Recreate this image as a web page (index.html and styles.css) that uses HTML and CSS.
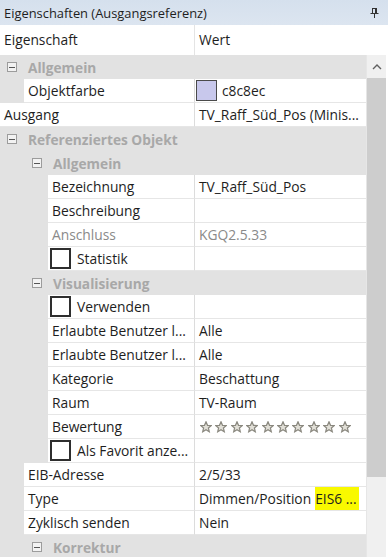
FILE: index.html
```html
<!DOCTYPE html>
<html lang="de">
<head>
    <meta charset="UTF-8">
    <title>Eigenschaften</title>
    <link rel="stylesheet" href="styles.css">
</head>
<body>
    <div class="panel">
        <div class="titlebar">
            <span>Eigenschaften (Ausgangsreferenz)</span>
            <svg class="pin" width="9" height="10" viewBox="0 0 9 10">
                <path d="M2 0.5h5M2.5 0.5v5M5.5 0.5v5M6.5 0.5v5M0.5 5.5h8M4.5 5.5v4.5" stroke="#333" stroke-width="1" fill="none"/>
            </svg>
        </div>
        <div class="header">
            <div class="hname">Eigenschaft</div>
            <div class="hvalue">Wert</div>
        </div>
        <div class="body">
            <div class="grid">
                <div class="row group g0"><span class="toggle"></span><span class="gname">Allgemein</span></div>
                <div class="row prop l1"><div class="name">Objektfarbe</div><div class="value"><span class="swatch"></span>c8c8ec</div></div>
                <div class="row prop l0"><div class="name">Ausgang</div><div class="value">TV_Raff_Süd_Pos (Minis...</div></div>
                <div class="row group g0"><span class="toggle"></span><span class="gname">Referenziertes Objekt</span></div>
                <div class="row group g1"><span class="toggle"></span><span class="gname">Allgemein</span></div>
                <div class="row prop l2"><div class="name">Bezeichnung</div><div class="value">TV_Raff_Süd_Pos</div></div>
                <div class="row prop l2"><div class="name">Beschreibung</div><div class="value"></div></div>
                <div class="row prop l2 muted"><div class="name">Anschluss</div><div class="value">KGQ2.5.33</div></div>
                <div class="row prop l2"><div class="name check"><span class="box"></span>Statistik</div><div class="value"></div></div>
                <div class="row group g1"><span class="toggle"></span><span class="gname">Visualisierung</span></div>
                <div class="row prop l2"><div class="name check"><span class="box"></span>Verwenden</div><div class="value"></div></div>
                <div class="row prop l2"><div class="name">Erlaubte Benutzer l...</div><div class="value">Alle</div></div>
                <div class="row prop l2"><div class="name">Erlaubte Benutzer l...</div><div class="value">Alle</div></div>
                <div class="row prop l2"><div class="name">Kategorie</div><div class="value">Beschattung</div></div>
                <div class="row prop l2"><div class="name">Raum</div><div class="value">TV-Raum</div></div>
                <div class="row prop l2"><div class="name">Bewertung</div><div class="value stars-cell" id="stars"></div></div>
                <div class="row prop l2"><div class="name check"><span class="box"></span>Als Favorit anze...</div><div class="value"></div></div>
                <div class="row prop l1"><div class="name">EIB-Adresse</div><div class="value">2/5/33</div></div>
                <div class="row prop l1"><div class="name">Type</div><div class="value">Dimmen/Position <span class="mark">EIS6 ...</span></div></div>
                <div class="row prop l1"><div class="name">Zyklisch senden</div><div class="value">Nein</div></div>
                <div class="row group g1"><span class="toggle"></span><span class="gname">Korrektur</span></div>
            </div>
            <div class="scrollbar">
                <div class="arrow">
                    <svg width="10" height="6" viewBox="0 0 10 6"><path d="M1 5L5 1L9 5" stroke="#606060" stroke-width="1.4" fill="none"/></svg>
                </div>
                <div class="thumb"></div>
            </div>
        </div>
    </div>

    <script>
        // ten outlined rating stars
        const starsCell = document.getElementById('stars');
        const star = '<svg width="12" height="12" viewBox="0 0 12 12"><polygon points="6,0.8 7.5,4.3 11.3,4.5 8.4,7 9.3,10.8 6,8.8 2.7,10.8 3.6,7 0.7,4.5 4.5,4.3" fill="#e2e0d8" stroke="#8a887f" stroke-width="1.2"/></svg>';
        starsCell.innerHTML = '<span class="stars">' + star.repeat(10) + '</span>';
    </script>
</body>
</html>
```

FILE: styles.css
```css
body {
    margin: 0;
    font-family: 'Open Sans', sans-serif;
    color: #1e1e1e;
    background: #fff;
}
.panel {
    width: 388px;
    height: 557px;
    overflow: hidden;
    display: flex;
    flex-direction: column;
}
.titlebar {
    height: 25px;
    flex: 0 0 25px;
    background: linear-gradient(#d5e0ed, #dce5f0);
    display: flex;
    align-items: center;
    justify-content: space-between;
    padding: 0 9px 0 4px;
    font-size: 12.9px;
}
.pin {
    display: block;
}
.header {
    height: 30px;
    flex: 0 0 30px;
    display: flex;
    font-size: 13.8px;
    line-height: 30px;
}
.hname {
    width: 195px;
    box-sizing: border-box;
    padding-left: 4px;
    border-right: 1px solid #e4e4e4;
}
.hvalue {
    padding-left: 4px;
}
.body {
    flex: 1;
    display: flex;
    min-height: 0;
}
.grid {
    width: 366px;
    background: #e2e2e2;
    font-size: 13.8px;
}
.row {
    display: flex;
    height: 24px;
    background: #e2e2e2;
}
.group {
    align-items: center;
}
.g0 {
    padding-left: 7px;
}
.g1 {
    padding-left: 32px;
}
.toggle {
    width: 10px;
    height: 10px;
    box-sizing: border-box;
    border: 1px solid #9c9c9c;
    background: #f2f2f2;
    display: flex;
    align-items: center;
    justify-content: center;
    margin-right: 11px;
}
.toggle::before {
    content: '';
    width: 6px;
    height: 1px;
    background: #555;
}
.gname {
    font-weight: bold;
    color: #a8a8a8;
    font-size: 13.7px;
}
.name, .value {
    background: #fff;
    border-bottom: 1px solid #e6e6e6;
    line-height: 23px;
    padding-left: 4px;
    box-sizing: border-box;
    white-space: nowrap;
    overflow: hidden;
}
.name {
    border-right: 1px solid #dcdcdc;
}
.value {
    flex: 1;
    display: flex;
    align-items: center;
}
.l0 .name { width: 195px; }
.l1 { padding-left: 24px; }
.l1 .name { width: 171px; }
.l2 { padding-left: 48px; }
.l2 .name { width: 147px; }
.muted .name, .muted .value {
    color: #8a8a8a;
}
.check {
    display: flex;
    align-items: center;
    padding-left: 2px;
}
.box {
    width: 21px;
    height: 21px;
    box-sizing: border-box;
    border: 2px solid #2e2e2e;
    background: #fff;
    margin-right: 6px;
    margin-top: -1px;
}
.swatch {
    width: 21px;
    height: 21px;
    box-sizing: border-box;
    border: 1px solid #4a4a4a;
    background: #c8c8ec;
    margin: 0 5px 0 -3px;
}
.stars {
    display: flex;
    gap: 3.4px;
    padding-left: 1px;
}
.stars svg {
    display: block;
}
.mark {
    background: #f9f900;
    margin-left: 4px;
    line-height: 23px;
    padding-right: 2px;
}
.scrollbar {
    width: 19px;
    border-left: 1px solid #e6e6e6;
    border-right: 2px solid #fff;
    background: #f0f0f0;
    display: flex;
    flex-direction: column;
}
.arrow {
    height: 23px;
    display: flex;
    align-items: center;
    justify-content: center;
}
.thumb {
    height: 399px;
    background: #cdcdcd;
}
```
